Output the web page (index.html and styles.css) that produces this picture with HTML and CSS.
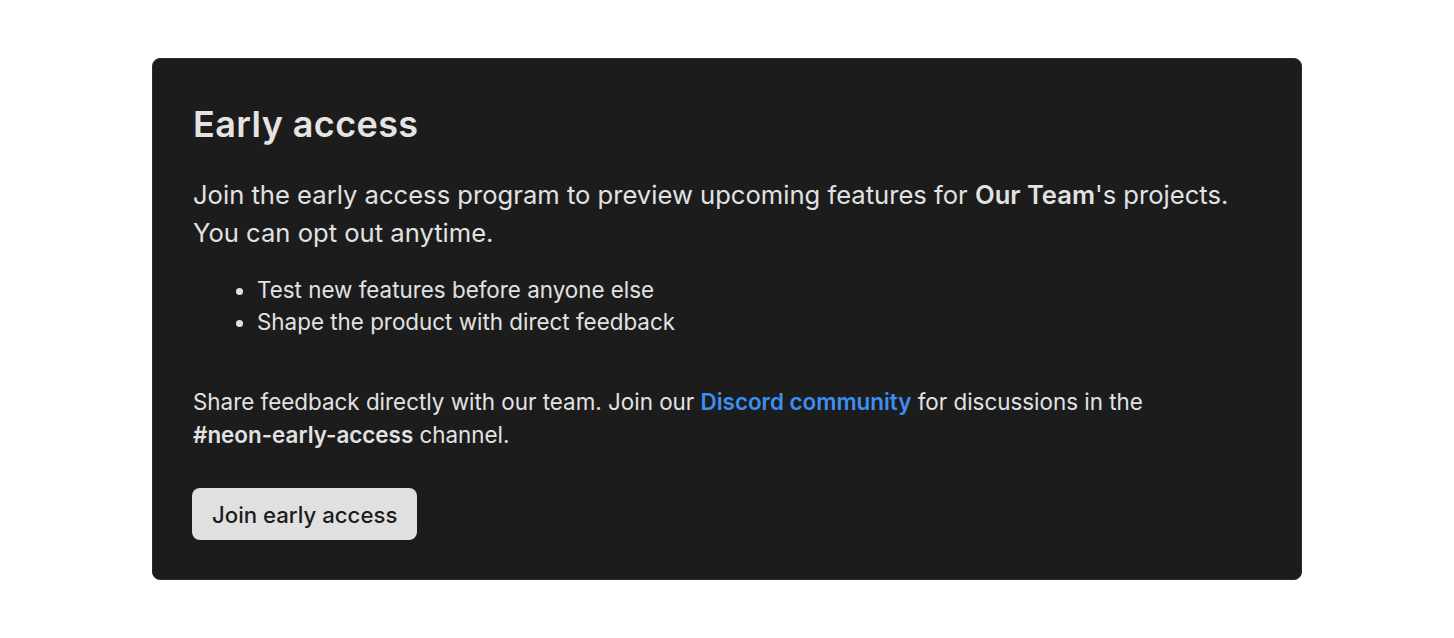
FILE: index.html
```html
<!DOCTYPE html>
<html>
<head>
<meta charset="utf-8">
<link rel="stylesheet" href="styles.css">
</head>
<body>
<div class="page">
  <section class="card">
    <h1 class="title">Early access</h1>
    <p class="lead">Join the early access program to preview upcoming features for <strong>Our Team</strong>'s projects. You can opt out anytime.</p>
    <ul class="perks">
      <li>Test new features before anyone else</li>
      <li>Shape the product with direct feedback</li>
    </ul>
    <p class="note">Share feedback directly with our team. Join our <a class="link" href="#">Discord community</a> for discussions in the <strong class="channel">#neon-early-access</strong> channel.</p>
    <button class="btn">Join early access</button>
  </section>
</div>
</body>
</html>
```

FILE: styles.css
```css
* { box-sizing: border-box; }
html, body { margin: 0; padding: 0; background: #ffffff; }
body { font-family: Inter, "Noto Sans", sans-serif; }
.page {
  display: flex;
  justify-content: center;
  padding-top: 58px;
}
.card {
  width: 1150px;
  height: 522px;
  background: #1c1c1c;
  border: 1px solid #2c2c2c;
  border-radius: 8px;
  padding: 41px 40px 0;
  color: #e2e2e2;
}
.title {
  margin: 0;
  font-size: 36px;
  letter-spacing: 0.4px;
  font-weight: 600;
  line-height: 48px;
  color: #e4e4e4;
}
.lead {
  margin: 28px 0 0;
  font-size: 25.6px;
  line-height: 38px;
  width: 1060px;
}
.lead strong { font-weight: 600; }
.perks {
  margin: 22px 0 0;
  padding-left: 64px;
  font-size: 22.4px;
  line-height: 32px;
}
.note {
  margin: 47px 0 0;
  font-size: 22.4px;
  line-height: 33px;
}
.note strong { font-weight: 600; }
.channel { white-space: nowrap; }
.link {
  color: #3d8ef0;
  font-weight: 600;
  text-decoration: none;
}
.btn {
  margin-top: 37px;
  margin-left: -1px;
  display: inline-block;
  height: 52px;
  padding: 0 20px;
  background: #e0e0e0;
  color: #1c1c1c;
  border: none;
  border-radius: 8px;
  font-family: Inter, "Noto Sans", sans-serif;
  font-size: 22.2px;
  font-weight: 500;
}
```
